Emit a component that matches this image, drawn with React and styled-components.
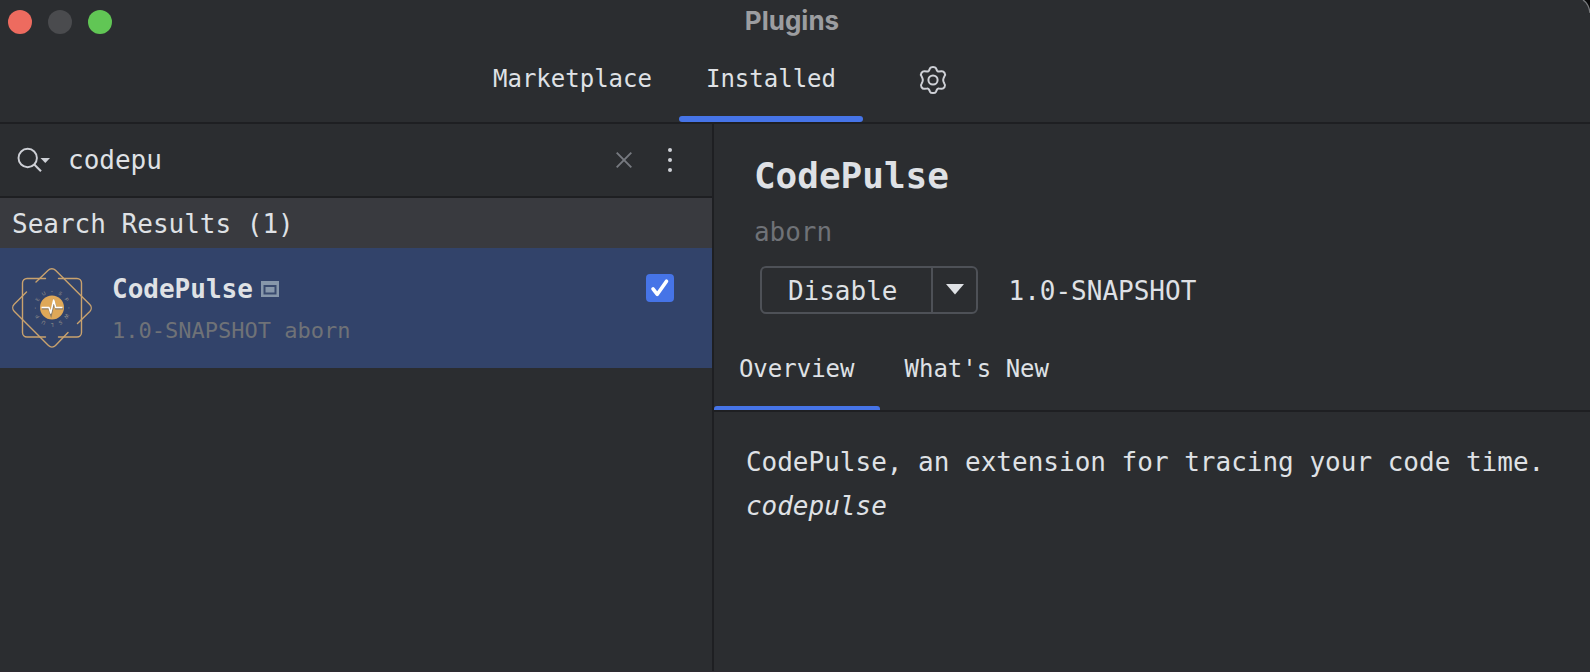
import React, { useState } from "react";
import styled, { createGlobalStyle } from "styled-components";

const color = {
  base: "#2b2d30",
  line: "#1e1f22",
  text: "#dfe1e5",
  muted: "#6f7277",
  title: "#9c9da0",
  accent: "#4674e7",
  heading: "#393a3f",
  selected: "#32436a",
  outline: "#4e5157",
  icon: "#ced0d6",
};

const mono = '"DejaVu Sans Mono", "Liberation Mono", monospace';

const GlobalStyle = createGlobalStyle`
  *, *::before, *::after { box-sizing: border-box; }
  body { margin: 0; background: ${color.base}; }
  button, input { font: inherit; color: inherit; background: none; border: 0; padding: 0; margin: 0; }
  svg { display: block; flex: none; }
`;

const Window = styled.div`
  position: relative;
  display: flex;
  flex-direction: column;
  min-height: 100vh;
  background: ${color.base};
  border-bottom: 1px solid #2f2a31;
  color: ${color.text};
  font: 400 26px/44px ${mono};
`;

const Corner = styled.svg`
  position: absolute;
  top: 0;
  right: 0;
`;

const TitleBar = styled.header`
  display: grid;
  grid-template-columns: 1fr auto 1fr;
  align-items: center;
  height: 44px;
  padding: 0 14px 0 8px;
`;

const Lights = styled.div`
  display: flex;
  gap: 16px;
`;

const Light = styled.button`
  width: 24px;
  height: 24px;
  border-radius: 50%;
  background: ${(p) => p.$fill};
`;

const WindowTitle = styled.h1`
  margin: 0;
  padding-bottom: 2px;
  font: 700 26px/40px Inter, sans-serif;
  color: ${color.title};
`;

const MainTabs = styled.nav`
  display: flex;
  justify-content: center;
  align-items: flex-start;
  padding-right: 10%;
  border-bottom: 2px solid ${color.line};
`;

const Tab = styled.button`
  position: relative;
  height: ${(p) => (p.$large ? 78 : 86)}px;
  padding: ${(p) => (p.$large ? "19px 27px 27px" : "29px 25px 25px")};
  font-size: 24px;
  line-height: 32px;
  white-space: nowrap;

  &::after {
    content: "";
    position: absolute;
    left: 0;
    right: 0;
    bottom: 0;
    height: ${(p) => (p.$large ? 6 : 4)}px;
    border-radius: ${(p) => (p.$large ? "3px" : "3px 3px 0 0")};
    background: ${(p) => (p.$active ? color.accent : "transparent")};
  }
`;

const IconButton = styled.button`
  display: grid;
  place-items: center;
  width: 40px;
  height: 40px;
  flex: none;
`;

const GearButton = styled(IconButton)`
  margin: 16px 12px 0 50px;
`;

const Body = styled.div`
  display: grid;
  grid-template-columns: 449fr 551fr;
  flex: 1;
`;

const ListPane = styled.section`
  min-width: 0;
  border-right: 2px solid ${color.line};
`;

const SearchRow = styled.div`
  display: flex;
  align-items: center;
  height: 74px;
  padding: 0 22px 0 16px;
  border-bottom: 2px solid ${color.line};
`;

const SearchInput = styled.input`
  flex: 1;
  min-width: 0;
  height: 72px;
  margin-left: 16px;
  outline: 0;
`;

const MoreButton = styled(IconButton)`
  margin-left: 6px;
`;

const GroupHeading = styled.h2`
  height: 50px;
  margin: 0;
  padding: 0 12px;
  background: ${color.heading};
  font: inherit;
  line-height: 52px;
`;

const PluginRow = styled.article`
  display: flex;
  align-items: center;
  gap: 20px;
  height: 120px;
  padding: 14px 38px 14px 12px;
  background: ${color.selected};
`;

const PluginText = styled.div`
  flex: 1;
  min-width: 0;
  padding-top: 4px;
  line-height: 42px;
`;

const PluginName = styled.div`
  display: flex;
  align-items: center;
  gap: 8px;
  font-weight: 700;
`;

const PluginMeta = styled.div`
  font-size: 22px;
  color: ${color.muted};
`;

const CheckLabel = styled.label`
  position: relative;
  align-self: flex-start;
  width: 28px;
  height: 28px;
  margin-top: 12px;

  input {
    display: block;
    appearance: none;
    width: 28px;
    height: 28px;
    border-radius: 4px;
    border: 2px solid ${color.accent};
  }
  input:checked { background: ${color.accent}; }
  svg { position: absolute; inset: 0; pointer-events: none; }
`;

const DetailPane = styled.main`
  min-width: 0;
`;

const DetailHead = styled.div`
  padding: 24px 40px 0;
`;

const DetailTitle = styled.h2`
  margin: 0 0 6px;
  font-size: 36px;
  line-height: 56px;
  font-weight: 700;
`;

const Author = styled.div`
  color: ${color.muted};
`;

const Actions = styled.div`
  display: flex;
  align-items: center;
  gap: 30px;
  margin: 12px 6px 0;
`;

const SplitButton = styled.div`
  display: flex;
  height: 48px;
  border: 2px solid ${color.outline};
  border-radius: 6px;
`;

const DisableButton = styled.button`
  padding: 2px 34px 0 26px;
  line-height: 42px;
`;

const MenuButton = styled.button`
  display: grid;
  place-items: center;
  width: 45px;
  border-left: 2px solid ${color.outline};
`;

const Version = styled.span`
  padding-top: 2px;
  white-space: nowrap;
`;

const DetailTabs = styled.nav`
  display: flex;
  margin-top: 10px;
  border-bottom: 2px solid ${color.line};
`;

const Description = styled.div`
  padding: 28px 32px;

  p { margin: 0; }
`;

const ringMarks = ["-", "S", "P", "-", "W", "S", "L", "U", "P", "-", "E", "U"];

function PluginLogo() {
  return (
    <svg width="80" height="80" viewBox="0 0 80 80" fill="none" aria-hidden="true">
      <g stroke="#c9a26e" strokeWidth="1.4" strokeLinecap="round">
        <path d="M33.5 10.5H15a4.5 4.5 0 0 0-4.5 4.5v49.5a4.5 4.5 0 0 0 4.5 4.5h18.5" />
        <path d="M46.5 10.5H65a4.5 4.5 0 0 1 4.5 4.5v49.5a4.5 4.5 0 0 1-4.5 4.5H46.5" />
        <path d="M24 14 36.2 2.3a5 5 0 0 1 7.3 0L77.8 36.5a5 5 0 0 1 0 7L65.5 55.5" />
        <path d="M14.5 24 2.2 36.2a5 5 0 0 0 0 7L36.5 77.6a5 5 0 0 0 7 0L56 64.5" />
      </g>
      <g fill="#9c968c" fontFamily="Inter, sans-serif" fontSize="5" textAnchor="middle">
        {ringMarks.map((m, i) => (
          <text key={i} x="40" y="25" transform={`rotate(${i * 30} 40 40)`}>{m}</text>
        ))}
      </g>
      <circle cx="40" cy="39.5" r="12" fill="#dfa858" />
      <path d="M30 40.5h7l2 6 3-12.5 2 6.5h7" stroke="#8b7b66" strokeWidth="2" />
      <path d="M29.5 39.5h7.5l1.7 5.5 3-13 2 7.5h6.8" stroke="#fff" strokeWidth="1.5" strokeLinejoin="round" />
    </svg>
  );
}

export default function App() {
  const [query, setQuery] = useState("codepu");
  const [enabled, setEnabled] = useState(true);

  return (
    <>
      <GlobalStyle />
      <Window>
        <Corner width="8" height="14" viewBox="0 0 8 14" aria-hidden="true">
          <path d="M2 0Q7 4 8 13V0Z" fill="#0b0b0c" />
          <path d="M1 0Q7 4 8 13" fill="none" stroke="#77797c" strokeWidth="1.3" />
        </Corner>
        <TitleBar>
          <Lights>
            <Light $fill="#ed6b5f" aria-label="Close" />
            <Light $fill="#4a4b4e" aria-label="Minimize" />
            <Light $fill="#61c655" aria-label="Zoom" />
          </Lights>
          <WindowTitle>Plugins</WindowTitle>
        </TitleBar>
        <MainTabs>
          <Tab $large>Marketplace</Tab>
          <Tab $large $active>Installed</Tab>
          <GearButton aria-label="Settings">
            <svg width="28" height="30" viewBox="0 0 28 30" fill="none" stroke={color.icon} strokeWidth="2" strokeLinejoin="round">
              <path d="M11 3.3Q11.7 1.9 14 1.9T17 3.3L18 5.5Q18.6 6.7 19.9 6.5L22.6 6.2Q24.3 6 25.5 7.9T25.5 11.1L24.5 13.3Q23.8 15 24.5 16.7L25.5 18.9Q26.7 20.3 25.5 22.1T22.6 23.8L19.9 23.5Q18.6 23.3 18 24.5L17 26.7Q16.3 28.1 14 28.1T11 26.7L10 24.5Q9.4 23.3 8.1 23.5L5.4 23.8Q3.7 24 2.5 22.1T2.5 18.9L3.5 16.7Q4.2 15 3.5 13.3L2.5 11.1Q1.3 9.7 2.5 7.9T5.4 6.2L8.1 6.5Q9.4 6.7 10 5.5Z" />
              <circle cx="14" cy="15" r="4.6" />
            </svg>
          </GearButton>
        </MainTabs>
        <Body>
          <ListPane>
            <SearchRow>
              <svg width="36" height="28" viewBox="0 0 36 28" fill="none" aria-hidden="true">
                <circle cx="11.7" cy="12" r="9.2" stroke={color.icon} strokeWidth="1.9" />
                <path d="M18.3 18.6 25 25.3" stroke={color.icon} strokeWidth="2.1" />
                <path d="M24.5 12h9.5l-4.7 5z" fill={color.icon} />
              </svg>
              <SearchInput aria-label="Search plugins" value={query} onChange={(e) => setQuery(e.target.value)} />
              <IconButton aria-label="Clear search" onClick={() => setQuery("")}>
                <svg width="16" height="16" viewBox="0 0 16 16" fill="none" stroke="#777a80" strokeWidth="1.9">
                  <path d="M.7.7l14.6 14.6M15.3.7.7 15.3" />
                </svg>
              </IconButton>
              <MoreButton aria-label="More options">
                <svg width="4" height="24" viewBox="0 0 4 24" fill={color.icon}>
                  <circle cx="2" cy="2" r="2" />
                  <circle cx="2" cy="12" r="2" />
                  <circle cx="2" cy="22" r="2" />
                </svg>
              </MoreButton>
            </SearchRow>
            <GroupHeading>Search Results (1)</GroupHeading>
            <PluginRow>
              <PluginLogo />
              <PluginText>
                <PluginName>
                  CodePulse
                  <svg width="18" height="16" viewBox="0 0 18 16" aria-hidden="true">
                    <path d="M0 0h18v16H0z" fill="#8797aa" />
                    <path d="M2.5 4h13v9.5h-13z" fill="#394a6e" />
                    <path d="M4.5 6h9v5.5h-9z" fill="#8797aa" />
                  </svg>
                </PluginName>
                <PluginMeta>1.0-SNAPSHOT aborn</PluginMeta>
              </PluginText>
              <CheckLabel>
                <input type="checkbox" aria-label="Enable CodePulse" checked={enabled} onChange={(e) => setEnabled(e.target.checked)} />
                {enabled && (
                  <svg width="28" height="28" viewBox="0 0 28 28" fill="none" stroke="#fff" strokeWidth="3.6" strokeLinecap="round" strokeLinejoin="round">
                    <path d="M7 14.8 11.3 20.3 20.5 7.2" />
                  </svg>
                )}
              </CheckLabel>
            </PluginRow>
          </ListPane>
          <DetailPane>
            <DetailHead>
              <DetailTitle>CodePulse</DetailTitle>
              <Author>aborn</Author>
              <Actions>
                <SplitButton>
                  <DisableButton>Disable</DisableButton>
                  <MenuButton aria-label="More actions">
                    <svg width="18" height="18" viewBox="0 0 18 18" fill={color.text}>
                      <path d="M0 3h18l-9 10.5z" />
                    </svg>
                  </MenuButton>
                </SplitButton>
                <Version>1.0-SNAPSHOT</Version>
              </Actions>
            </DetailHead>
            <DetailTabs>
              <Tab $active>Overview</Tab>
              <Tab>What's New</Tab>
            </DetailTabs>
            <Description>
              <p>CodePulse, an extension for tracing your code time.</p>
              <p><em>codepulse</em></p>
            </Description>
          </DetailPane>
        </Body>
      </Window>
    </>
  );
}
